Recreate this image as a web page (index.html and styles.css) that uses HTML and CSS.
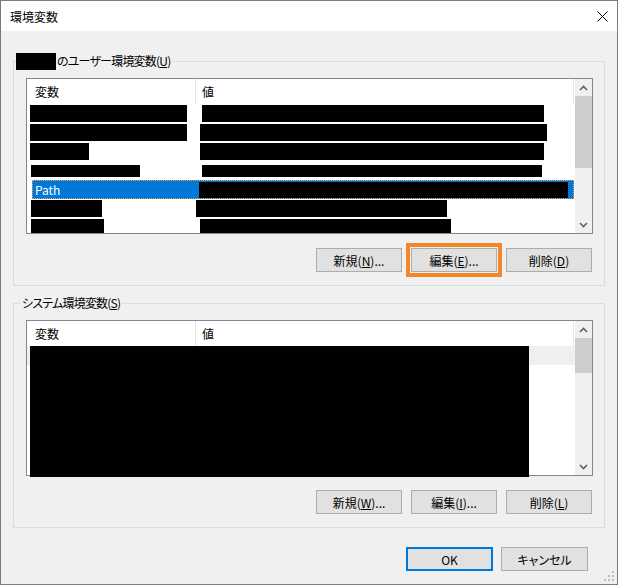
FILE: index.html
```html
<!DOCTYPE html>
<html lang="ja">
<head>
    <meta charset="UTF-8">
    <title>環境変数</title>
    <link rel="stylesheet" href="styles.css">
</head>
<body>
    <div class="window">
        <div class="titlebar">
            <span class="title">環境変数</span>
            <svg class="close" width="11" height="11" viewBox="0 0 11 11">
                <path d="M0.5 0.5 L10.5 10.5 M10.5 0.5 L0.5 10.5" stroke="#000" stroke-width="1" fill="none"/>
            </svg>
        </div>

        <div class="content">
            <!-- ユーザー環境変数 -->
            <div class="group">
                <div class="group-title"><span class="legend-redact"></span>のユーザー環境変数(<u>U</u>)</div>
                <div class="list">
                    <div class="list-main">
                        <div class="list-head">
                            <div class="col-name">変数</div>
                            <div class="col-value">値</div>
                        </div>
                        <div class="rows">
                            <div class="row">
                                <div class="col-name"><span class="bar" style="margin-left:3px;width:157px"></span></div>
                                <div class="col-value"><span class="bar" style="margin-left:7px;width:342px"></span></div>
                            </div>
                            <div class="row">
                                <div class="col-name"><span class="bar" style="margin-left:3px;width:157px"></span></div>
                                <div class="col-value"><span class="bar" style="margin-left:5px;width:347px"></span></div>
                            </div>
                            <div class="row">
                                <div class="col-name"><span class="bar" style="margin-left:3px;width:59px"></span></div>
                                <div class="col-value"><span class="bar" style="margin-left:5px;width:344px"></span></div>
                            </div>
                            <div class="row">
                                <div class="col-name"><span class="bar bar-thin" style="margin-left:4px;width:109px"></span></div>
                                <div class="col-value"><span class="bar bar-thin" style="margin-left:7px;width:340px"></span></div>
                            </div>
                            <div class="row selected">
                                <div class="col-name">Path</div>
                                <div class="col-value"><span class="bar" style="margin-left:4px;width:369px;height:16px"></span></div>
                            </div>
                            <div class="row">
                                <div class="col-name"><span class="bar" style="margin-left:4px;width:71px"></span></div>
                                <div class="col-value"><span class="bar" style="margin-left:1px;width:251px"></span></div>
                            </div>
                            <div class="row">
                                <div class="col-name"><span class="bar" style="margin-left:4px;width:73px"></span></div>
                                <div class="col-value"><span class="bar" style="margin-left:5px;width:251px"></span></div>
                            </div>
                        </div>
                    </div>
                    <div class="scrollbar">
                        <div class="sb-btn">
                            <svg width="9" height="6" viewBox="0 0 9 6"><path d="M1 5 L4.5 1.5 L8 5" stroke="#606060" stroke-width="1.6" fill="none"/></svg>
                        </div>
                        <div class="sb-thumb"></div>
                        <div class="sb-space"></div>
                        <div class="sb-btn">
                            <svg width="9" height="6" viewBox="0 0 9 6"><path d="M1 1 L4.5 4.5 L8 1" stroke="#606060" stroke-width="1.6" fill="none"/></svg>
                        </div>
                    </div>
                </div>
                <div class="buttons">
                    <button class="btn">新規(<u>N</u>)...</button>
                    <button class="btn btn-focus">編集(<u>E</u>)...</button>
                    <button class="btn">削除(<u>D</u>)</button>
                </div>
            </div>

            <!-- システム環境変数 -->
            <div class="group">
                <div class="group-title">システム環境変数(<u>S</u>)</div>
                <div class="list">
                    <div class="list-main">
                        <div class="list-head">
                            <div class="col-name">変数</div>
                            <div class="col-value">値</div>
                        </div>
                        <div class="rows">
                            <div class="row inactive"></div>
                        </div>
                    </div>
                    <div class="scrollbar">
                        <div class="sb-btn">
                            <svg width="9" height="6" viewBox="0 0 9 6"><path d="M1 5 L4.5 1.5 L8 5" stroke="#606060" stroke-width="1.6" fill="none"/></svg>
                        </div>
                        <div class="sb-thumb sb-thumb-short"></div>
                        <div class="sb-space"></div>
                        <div class="sb-btn">
                            <svg width="9" height="6" viewBox="0 0 9 6"><path d="M1 1 L4.5 4.5 L8 1" stroke="#606060" stroke-width="1.6" fill="none"/></svg>
                        </div>
                    </div>
                    <div class="block-redact"></div>
                </div>
                <div class="buttons">
                    <button class="btn">新規(<u>W</u>)...</button>
                    <button class="btn">編集(<u>I</u>)...</button>
                    <button class="btn">削除(<u>L</u>)</button>
                </div>
            </div>

            <div class="footer">
                <button class="btn btn-wide btn-default">OK</button>
                <button class="btn btn-wide">キャンセル</button>
            </div>
        </div>

        <svg class="grip" width="12" height="12" viewBox="0 0 12 12">
            <rect x="9" y="1" width="2" height="2" fill="#bcbcbc"/>
            <rect x="5" y="5" width="2" height="2" fill="#bcbcbc"/>
            <rect x="9" y="5" width="2" height="2" fill="#bcbcbc"/>
            <rect x="1" y="9" width="2" height="2" fill="#bcbcbc"/>
            <rect x="5" y="9" width="2" height="2" fill="#bcbcbc"/>
            <rect x="9" y="9" width="2" height="2" fill="#bcbcbc"/>
        </svg>
    </div>
</body>
</html>
```

FILE: styles.css
```css
body {
    margin: 0;
    background: #f0f0f0;
}
.window {
    position: relative;
    width: 618px;
    height: 585px;
    box-sizing: border-box;
    border: 1px solid #7a7a7a;
    background: #f0f0f0;
    font-family: "Noto Sans CJK JP", sans-serif;
    font-size: 12px;
    font-feature-settings: "palt";
    color: #000;
}
.titlebar {
    height: 30px;
    background: #fff;
    display: flex;
    align-items: center;
    justify-content: space-between;
    padding: 0 9px;
}
.content {
    padding: 30px 12px 0;
}
.group {
    position: relative;
    border: 1px solid #dcdcdc;
    padding: 16px 11px 13px 12px;
}
.group + .group {
    margin-top: 17px;
}
.group-title {
    position: absolute;
    top: -10px;
    left: 6px;
    height: 18px;
    line-height: 18px;
    padding: 0 2px;
    background: #f0f0f0;
    letter-spacing: -0.8px;
    display: flex;
    align-items: center;
}
.legend-redact {
    display: inline-block;
    width: 40px;
    height: 17px;
    margin-left: -6px;
    margin-right: 1px;
    background: #000;
}
.list {
    position: relative;
    height: 156px;
    box-sizing: border-box;
    border: 1px solid #828790;
    background: #fff;
    display: flex;
}
.list-main {
    flex: 1;
    overflow: hidden;
}
.list-head {
    height: 25px;
    display: flex;
}
.list-head .col-name {
    width: 169px;
    box-sizing: border-box;
    padding-left: 8px;
    line-height: 25px;
    border-right: 1px solid #e5e5e5;
}
.list-head .col-value {
    width: 378px;
    box-sizing: border-box;
    padding-left: 6px;
    line-height: 25px;
    border-right: 1px solid #e5e5e5;
}
.row {
    height: 19px;
    display: flex;
    align-items: center;
}
.row .col-name {
    width: 168px;
    flex-shrink: 0;
    display: flex;
    align-items: center;
}
.row .col-value {
    display: flex;
    align-items: center;
}
.row.selected {
    margin: 0 1px 0 5px;
    background: #0078d7;
    outline: 1px dotted #f4a04c;
    outline-offset: -1px;
    color: #fff;
}
.row.selected .col-name {
    width: 163px;
    padding-left: 3px;
    box-sizing: border-box;
}
.row.inactive {
    background: #efefef;
}
.bar {
    display: inline-block;
    height: 17px;
    background: #000;
}
.bar-thin {
    height: 12px;
}
.block-redact {
    position: absolute;
    left: 3px;
    top: 25px;
    width: 499px;
    height: 131px;
    background: #000;
}
.scrollbar {
    width: 17px;
    background: #f0f0f0;
    display: flex;
    flex-direction: column;
}
.sb-btn {
    height: 17px;
    display: flex;
    align-items: center;
    justify-content: center;
}
.sb-thumb {
    height: 72px;
    background: #cdcdcd;
}
.sb-thumb-short {
    height: 35px;
}
.sb-space {
    flex: 1;
}
.buttons {
    display: flex;
    justify-content: flex-end;
    gap: 9px;
    margin-top: 14px;
    padding-right: 1px;
}
.btn {
    width: 86px;
    height: 24px;
    box-sizing: border-box;
    background: #e1e1e1;
    border: 1px solid #adadad;
    font-family: inherit;
    font-size: 12px;
    font-feature-settings: "palt";
    color: #000;
    padding: 0;
}
.btn-focus {
    outline: 4px solid #f5862a;
    outline-offset: 1px;
}
.footer {
    display: flex;
    justify-content: flex-end;
    gap: 8px;
    margin-top: 19px;
    padding-right: 17px;
}
.btn-wide {
    width: 87px;
}
.btn-default {
    border: 2px solid #0078d7;
}
.grip {
    position: absolute;
    right: 2px;
    bottom: 2px;
}
```
